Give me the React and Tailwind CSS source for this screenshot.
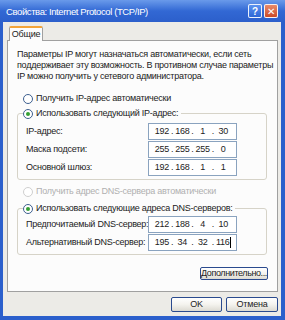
const font = { fontFamily: '"Liberation Sans", "DejaVu Sans", sans-serif' };

function Radio({ checked, disabled, label }) {
  return (
    <div className={"h-[11px] flex items-center gap-[3px] whitespace-nowrap " + (disabled ? "text-[#b0b0b0]" : "text-[#222]")}>
      <span className={"w-[10px] h-[10px] rounded-full border flex items-center justify-center bg-white " + (disabled ? "border-[#cfcfcf]" : "border-[#3d5f8f]")}>
        {checked && <span className="w-[4px] h-[4px] rounded-full bg-[#35a035]" />}
      </span>
      <span>{label}</span>
    </div>
  );
}

function IpField({ parts, caret }) {
  return (
    <div className="w-[89px] h-[17px] border border-[#8aa3bf] bg-white flex items-center px-[5px] text-[#222]">
      <span className="w-[16px] text-center">{parts[0]}</span>
      <span className="w-[5px] text-center">.</span>
      <span className="w-[16px] text-center">{parts[1]}</span>
      <span className="w-[5px] text-center">.</span>
      <span className="w-[16px] text-center">{parts[2]}</span>
      <span className="w-[5px] text-center">.</span>
      <span className="w-[16px] text-center">
        {parts[3]}
        {caret && <span className="inline-block w-px h-[11px] bg-black align-middle" />}
      </span>
    </div>
  );
}

function Row({ label, parts, caret }) {
  return (
    <div className="flex items-center">
      <span className="w-[122px] whitespace-nowrap">{label}</span>
      <IpField parts={parts} caret={caret} />
    </div>
  );
}

function Button({ children, className }) {
  return (
    <div className={"border border-[#2a4a8e] rounded-[2px] bg-gradient-to-b from-white via-[#f4f3ee] to-[#dcdad2] flex items-center justify-center text-[#222] whitespace-nowrap " + className}>
      {children}
    </div>
  );
}

export default function App() {
  return (
    <div className="w-[285px] h-[320px] bg-[#2b5fcc] flex flex-col text-[9px] leading-[11px] tracking-[-0.25px]" style={font}>

      {/* TITLE BAR */}
      <div className="h-[22px] shrink-0 flex items-center justify-between pl-[6px] pr-[7px] bg-gradient-to-b from-[#6a9aea] via-[#3268d4] to-[#2c5fcb]">
        <span className="text-white text-[9.5px] tracking-[-0.4px] mt-[1px]">Свойства: Internet Protocol (TCP/IP)</span>
        <div className="flex gap-[2px]">
          <div className="w-[14px] h-[14px] rounded-[2px] border border-white/90 bg-gradient-to-b from-[#5d93ef] to-[#2d66d6] text-white text-[10px] font-bold flex items-center justify-center">?</div>
          <div className="w-[14px] h-[14px] rounded-[2px] border border-white/90 bg-gradient-to-b from-[#e88a6a] to-[#cc4a26] text-white text-[10px] font-bold flex items-center justify-center">✕</div>
        </div>
      </div>

      {/* BODY */}
      <div className="flex-1 ml-[3px] mr-[4px] mb-[4px] bg-[#ecebe7] flex flex-col">

        {/* TAB */}
        <div className="flex pt-[3px] pl-[6px]">
          <div className="w-[34px] h-[15px] bg-[#fcfcfc] border border-b-0 border-[#a0a0a0] border-t-2 border-t-[#f2a43a] rounded-t-[2px] flex items-center justify-center text-[#222] relative top-px z-10">
            Общие
          </div>
        </div>

        {/* PANEL */}
        <div className="h-[252px] ml-[4px] mr-[3px] bg-[#fcfcfc] border border-[#a0a0a0] pt-[8px] flex flex-col text-[#222]">
          <div className="pl-[9px] flex flex-col whitespace-nowrap">
            <span>Параметры IP могут назначаться автоматически, если сеть</span>
            <span>поддерживает эту возможность. В противном случае параметры</span>
            <span>IP можно получить у сетевого администратора.</span>
          </div>

          <div className="mt-[11px] pl-[15px]">
            <Radio label="Получить IP-адрес автоматически" />
          </div>

          {/* IP GROUP */}
          <div className="mt-[9px] ml-[9px] mr-[10px] relative border border-[#d6d3c8] rounded-[3px] pl-[8px] pt-[9px] pb-[3px] flex flex-col gap-px">
            <div className="absolute -top-[6px] left-[5px] bg-[#fcfcfc] pr-[3px]">
              <Radio checked label="Использовать следующий IP-адрес:" />
            </div>
            <Row label="IP-адрес:" parts={["192", "168", "1", "30"]} />
            <Row label="Маска подсети:" parts={["255", "255", "255", "0"]} />
            <Row label="Основной шлюз:" parts={["192", "168", "1", "1"]} />
          </div>

          <div className="mt-[6px] pl-[15px]">
            <Radio disabled label="Получить адрес DNS-сервера автоматически" />
          </div>

          {/* DNS GROUP */}
          <div className="mt-[11px] ml-[9px] mr-[10px] relative border border-[#d6d3c8] rounded-[3px] pl-[8px] pt-[7px] pb-[3px] flex flex-col gap-px">
            <div className="absolute -top-[6px] left-[5px] bg-[#fcfcfc] pr-[3px]">
              <Radio checked label="Использовать следующие адреса DNS-серверов:" />
            </div>
            <Row label="Предпочитаемый DNS-сервер:" parts={["212", "188", "4", "10"]} />
            <Row label="Альтернативный DNS-сервер:" parts={["195", "34", "32", "116"]} caret />
          </div>

          <div className="flex justify-end mt-[12px] pr-[9px]">
            <Button className="w-[68px] h-[13px] tracking-[-0.4px]">Дополнительно...</Button>
          </div>
        </div>

        {/* FOOTER */}
        <div className="flex justify-end gap-[4px] mt-[5px] pr-[3px]">
          <Button className="w-[51px] h-[15px]">OK</Button>
          <Button className="w-[52px] h-[15px]">Отмена</Button>
        </div>
      </div>
    </div>
  );
}
